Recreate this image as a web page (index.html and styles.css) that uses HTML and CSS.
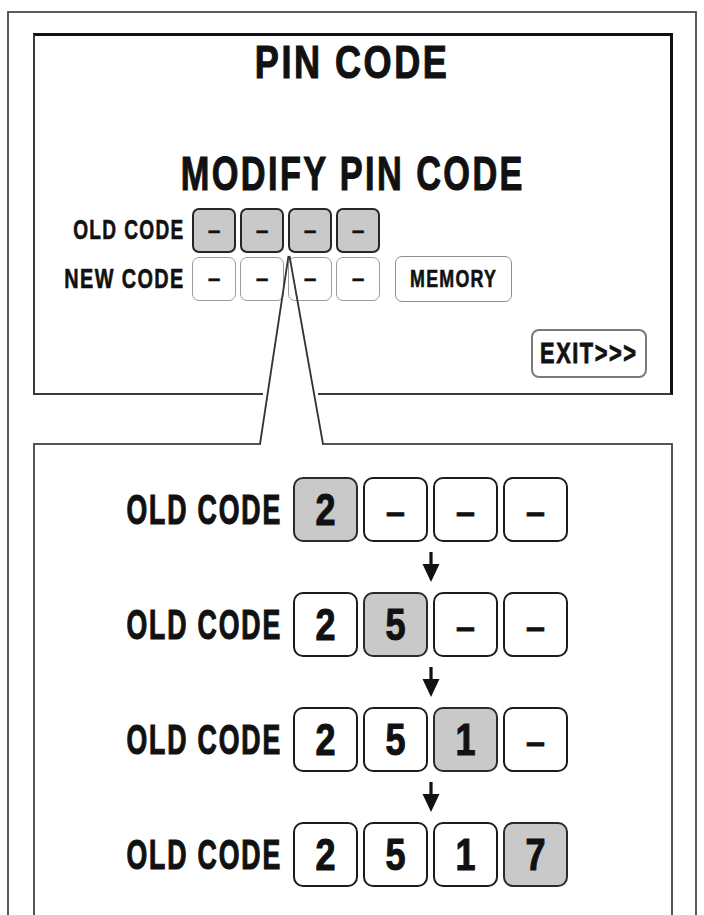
FILE: index.html
```html
<!DOCTYPE html>
<html lang="en">
<head>
<meta charset="utf-8">
<title>PIN CODE</title>
<link rel="stylesheet" href="styles.css">
</head>
<body>
<div class="frame">
  <section class="screen">
    <h1 class="title"><span class="cond cond--title">PIN CODE</span></h1>
    <h2 class="subtitle"><span class="cond cond--subtitle">MODIFY PIN CODE</span></h2>
    <div class="code-row code-row--old">
      <span class="label"><span class="cond cond--old">OLD CODE</span></span>
      <div class="keys">
        <span class="key key--old">–</span>
        <span class="key key--old">–</span>
        <span class="key key--old">–</span>
        <span class="key key--old">–</span>
      </div>
    </div>
    <div class="code-row code-row--new">
      <span class="label"><span class="cond cond--new">NEW CODE</span></span>
      <div class="keys">
        <span class="key key--new">–</span>
        <span class="key key--new">–</span>
        <span class="key key--new">–</span>
        <span class="key key--new">–</span>
      </div>
      <span class="btn btn--memory"><span class="cond cond--memory">MEMORY</span></span>
    </div>
    <div class="exit-row">
      <span class="btn btn--exit"><span class="cond cond--exit">EXIT&gt;&gt;&gt;</span></span>
    </div>
  </section>

  <section class="detail">
    <div class="step">
      <span class="step-label"><span class="cond cond--step">OLD CODE</span></span>
      <div class="step-keys">
        <span class="cell cell--active"><span class="cond cond--digit">2</span></span>
        <span class="cell cell--empty">–</span>
        <span class="cell cell--empty">–</span>
        <span class="cell cell--empty">–</span>
      </div>
    </div>
    <div class="arrow-row">
      <svg class="arrow" viewBox="0 0 22 30" width="22" height="30"><rect x="9.4" y="0" width="3.2" height="14"/><polygon points="2.5,12 19.5,12 11,30"/></svg>
    </div>
    <div class="step">
      <span class="step-label"><span class="cond cond--step">OLD CODE</span></span>
      <div class="step-keys">
        <span class="cell"><span class="cond cond--digit">2</span></span>
        <span class="cell cell--active"><span class="cond cond--digit">5</span></span>
        <span class="cell cell--empty">–</span>
        <span class="cell cell--empty">–</span>
      </div>
    </div>
    <div class="arrow-row">
      <svg class="arrow" viewBox="0 0 22 30" width="22" height="30"><rect x="9.4" y="0" width="3.2" height="14"/><polygon points="2.5,12 19.5,12 11,30"/></svg>
    </div>
    <div class="step">
      <span class="step-label"><span class="cond cond--step">OLD CODE</span></span>
      <div class="step-keys">
        <span class="cell"><span class="cond cond--digit">2</span></span>
        <span class="cell"><span class="cond cond--digit">5</span></span>
        <span class="cell cell--active"><span class="cond cond--digit">1</span></span>
        <span class="cell cell--empty">–</span>
      </div>
    </div>
    <div class="arrow-row">
      <svg class="arrow" viewBox="0 0 22 30" width="22" height="30"><rect x="9.4" y="0" width="3.2" height="14"/><polygon points="2.5,12 19.5,12 11,30"/></svg>
    </div>
    <div class="step">
      <span class="step-label"><span class="cond cond--step">OLD CODE</span></span>
      <div class="step-keys">
        <span class="cell"><span class="cond cond--digit">2</span></span>
        <span class="cell"><span class="cond cond--digit">5</span></span>
        <span class="cell"><span class="cond cond--digit">1</span></span>
        <span class="cell cell--active"><span class="cond cond--digit">7</span></span>
      </div>
    </div>
  </section>
</div>

<svg class="callout" width="704" height="915" viewBox="0 0 704 915">
  <rect x="263" y="391" width="55" height="6" fill="#fff"/>
  <rect x="261" y="441.5" width="61" height="5" fill="#fff"/>
  <line x1="288.5" y1="256" x2="260" y2="444" stroke="#333" stroke-width="1.8"/>
  <line x1="289.5" y1="256" x2="323" y2="444" stroke="#333" stroke-width="1.8"/>
</svg>
</body>
</html>
```

FILE: styles.css
```css
* {
  box-sizing: border-box;
}

html,
body {
  margin: 0;
  height: 915px;
  overflow: hidden;
  background: #fff;
}

body {
  font-family: "Liberation Sans", Arial, sans-serif;
  font-weight: 700;
  color: #111;
}

.cond {
  display: inline-block;
  flex-shrink: 0;
  white-space: nowrap;
  letter-spacing: 0.07em;
  -webkit-text-stroke: 0.6px #111;
}

.cond--title {
  transform: scaleX(0.784);
  -webkit-text-stroke: 1.1px #111;
}

.cond--subtitle {
  transform: scaleX(0.70);
  -webkit-text-stroke: 1.1px #111;
}

.cond--old {
  transform: scaleX(0.707);
  transform-origin: right center;
}

.cond--new {
  transform: scaleX(0.735);
  transform-origin: right center;
}

.cond--memory {
  transform: scaleX(0.743);
}

.cond--exit {
  transform: scaleX(0.752);
  -webkit-text-stroke: 0.8px #111;
}

.cond--step {
  transform: scaleX(0.62);
  transform-origin: right center;
  -webkit-text-stroke: 1.2px #111;
}

.cond--digit {
  letter-spacing: 0;
  transform: scaleX(0.8);
  -webkit-text-stroke: 1.1px #111;
}

.frame {
  margin: 11px 0 0 7px;
  width: 690px;
  height: 1000px;
  border: 2px solid #5a5a5a;
  border-bottom: 0;
  padding: 20px 0 0 24px;
}

/* ---------- top screen ---------- */
.screen {
  width: 640px;
  height: 362px;
  border-style: solid;
  border-color: #111 #111 #3a3a3a #3a3a3a;
  border-width: 3px 3px 2px 2px;
  display: flex;
  flex-direction: column;
}

.title {
  margin: 3px 0 0;
  font-size: 46px;
  line-height: 46px;
  font-weight: 700;
  text-align: center;
}

.subtitle {
  margin: 64px 0 0;
  font-size: 49px;
  line-height: 49px;
  font-weight: 700;
  text-align: center;
}

.code-row {
  display: flex;
  align-items: center;
}

.code-row--old {
  margin-top: 10px;
  height: 45px;
}

.code-row--new {
  margin-top: 3px;
  height: 46px;
}

.label {
  width: 150px;
  margin-right: 7px;
  display: flex;
  justify-content: flex-end;
  font-size: 27px;
  line-height: 1;
}

.keys {
  display: flex;
  gap: 4px;
}

.key {
  width: 44px;
  height: 45px;
  display: flex;
  align-items: center;
  justify-content: center;
  border-radius: 7px;
  font-size: 22px;
  -webkit-text-stroke: 0.6px #111;
}

.key--old {
  background: #c9c9c9;
  border: 2.5px solid #262626;
}

.key--new {
  height: 44px;
  background: #fff;
  border: 1.5px solid #9d9d9d;
}

.btn {
  display: flex;
  align-items: center;
  justify-content: center;
  background: #fff;
}

.btn--memory {
  margin-left: 15px;
  width: 117px;
  height: 46px;
  border: 1.5px solid #8f8f8f;
  border-radius: 7px;
  font-size: 24px;
}

.exit-row {
  display: flex;
  justify-content: flex-end;
  margin-top: 27px;
  padding-right: 23px;
}

.btn--exit {
  width: 116px;
  height: 49px;
  border: 2px solid #7a7a7a;
  border-radius: 8px;
  font-size: 29px;
}

/* ---------- detail panel ---------- */
.detail {
  margin-top: 48px;
  width: 640px;
  height: 600px;
  border: 2px solid #555;
  border-bottom: 0;
  padding-top: 32px;
}

.step {
  display: flex;
  align-items: center;
  height: 65px;
}

.step-label {
  width: 247px;
  margin-right: 11px;
  display: flex;
  justify-content: flex-end;
  font-size: 43px;
  line-height: 1;
}

.step-keys {
  display: flex;
  gap: 5px;
}

.cell {
  width: 65px;
  height: 65px;
  display: flex;
  align-items: center;
  justify-content: center;
  border: 2.5px solid #1c1c1c;
  border-radius: 10px;
  background: #fff;
  font-size: 45px;
}

.cell--active {
  background: #c9c9c9;
  border-color: #2a2a2a;
}

.cell--empty {
  font-size: 34px;
  -webkit-text-stroke: 0.8px #111;
  padding-top: 4px;
}

.arrow-row {
  height: 50px;
  padding: 10px 0 0 258px;
  display: flex;
}

.arrow {
  display: block;
  margin-left: 126.5px;
  fill: #111;
}

/* ---------- callout ---------- */
.callout {
  position: absolute;
  top: 0;
  left: 0;
  pointer-events: none;
}
```
